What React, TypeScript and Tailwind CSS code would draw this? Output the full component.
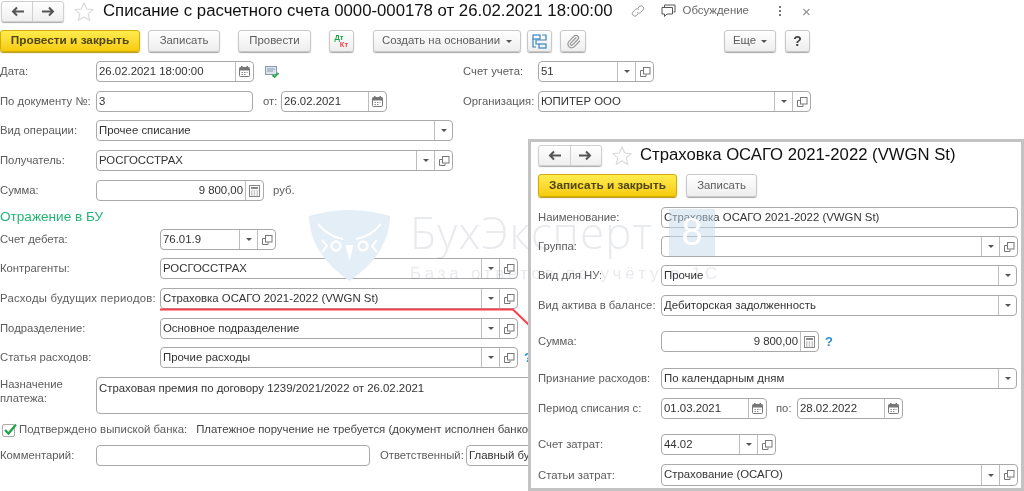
import type { ReactNode } from "react";
import { Paperclip } from "lucide-react";

type Slot = "drop" | "open" | "cal" | "calc";

const font = { fontFamily: '"Liberation Sans", Arial, sans-serif' };

function SlotIcon({ type }: { type: Slot }) {
  if (type === "drop") {
    return (
      <svg width="6" height="3" viewBox="0 0 6 3">
        <path d="M0 0h6L3 3z" fill="#555" />
      </svg>
    );
  }
  if (type === "open") {
    return (
      <svg width="12" height="12" viewBox="0 0 12 12" fill="none" stroke="#777" strokeWidth="1">
        <rect x="4.5" y="1.5" width="6.5" height="6.5" fill="#fff" />
        <path d="M4 4.5H1.5V10.5H7V8.5" />
      </svg>
    );
  }
  if (type === "cal") {
    return (
      <svg width="11" height="11" viewBox="0 0 11 11">
        <rect x="0.5" y="1.5" width="10" height="9" rx="1" fill="none" stroke="#777" />
        <rect x="0.5" y="1.5" width="10" height="3" fill="#777" />
        <rect x="2" y="0" width="1.5" height="2" fill="#777" />
        <rect x="7.5" y="0" width="1.5" height="2" fill="#777" />
        <path d="M2.5 6.5h1.5M5 6.5h1.5M7.5 6.5h1M2.5 8.5h1.5M5 8.5h1.5" stroke="#888" />
      </svg>
    );
  }
  return (
    <svg width="11" height="12" viewBox="0 0 11 12">
      <rect x="0.5" y="0.5" width="10" height="11" fill="none" stroke="#888" />
      <rect x="2" y="2" width="7" height="2" fill="#888" />
      <path d="M2 6h1.5M4.7 6h1.5M7.5 6H9M2 8h1.5M4.7 8h1.5M7.5 8H9M2 10h1.5M4.7 10h1.5M7.5 10H9" stroke="#999" />
    </svg>
  );
}

function Field({
  className,
  text,
  slots = [],
  right,
}: {
  className: string;
  text?: string;
  slots?: Slot[];
  right?: boolean;
}) {
  return (
    <div className={`flex h-full shrink-0 items-stretch rounded-[4px] border border-[#a9a9a9] ${className}`}>
      <div className={`min-w-0 flex-1 self-center truncate px-[2px] text-[11.4px] text-[#333] ${right ? "text-right" : ""}`}>
        {text}
      </div>
      {slots.map((s, i) => (
        <div key={i} className="flex w-[18px] shrink-0 items-center justify-center border-l border-[#bdbdbd]">
          <SlotIcon type={s} />
        </div>
      ))}
    </div>
  );
}

function Row({ label, labelW, className, children }: { label: string; labelW: string; className: string; children: ReactNode }) {
  return (
    <div className={`flex items-center ${className}`}>
      <div className={`shrink-0 text-[11.3px] whitespace-nowrap text-[#5c5c5c] ${labelW}`}>{label}</div>
      {children}
    </div>
  );
}

function Btn({ className, children, yellow }: { className: string; children: ReactNode; yellow?: boolean }) {
  return (
    <div
      className={`flex h-full shrink-0 items-center justify-center rounded-[3px] border ${
        yellow
          ? "border-[#cfae0a] bg-gradient-to-b from-[#ffec4d] to-[#f6cb00] text-[11.8px] font-bold text-[#4f4610] shadow-[0_1px_1px_#b59a10]"
          : "border-[#c8c8c8] bg-gradient-to-b from-white to-[#eeeeee] text-[11.4px] text-[#5c5c5c] shadow-[0_1px_1px_#a8a8a8]"
      } ${className}`}
    >
      {children}
    </div>
  );
}

function Nav({ className }: { className: string }) {
  const arrow = (d: string) => (
    <svg width="13" height="11" viewBox="0 0 13 11" fill="none" stroke="#555" strokeWidth="2">
      <path d={d} />
    </svg>
  );
  return (
    <div className={`flex h-[21px] shrink-0 rounded-[3px] border border-[#d0d0d0] bg-gradient-to-b from-white to-[#efefef] shadow-[0_1px_1px_#aaa] ${className}`}>
      <div className="flex flex-1 items-center justify-center border-r border-[#d0d0d0]">{arrow("M13 5.5H2M6 1.5l-4 4 4 4")}</div>
      <div className="flex flex-1 items-center justify-center">{arrow("M0 5.5h11M7 1.5l4 4-4 4")}</div>
    </div>
  );
}

function Star({ className }: { className: string }) {
  return (
    <svg className={`shrink-0 ${className}`} width="20" height="19" viewBox="0 0 20 19" fill="#fff" stroke="#d8dadc" strokeWidth="1.2">
      <path d="M10 1l2.7 6 6.3.7-4.7 4.2 1.3 6.3L10 15l-5.6 3.2 1.3-6.3L1 7.7 7.3 7z" />
    </svg>
  );
}

function DocWindow() {
  return (
    <div className="absolute top-[139px] left-[528px] h-[352px] w-[496px] border-[3px] border-[#c3c3c3] bg-white pl-[7px]">
      <div className="mt-[3px] flex h-[21px] items-center">
        <Nav className="w-[64px]" />
        <Star className="ml-[10px]" />
        <div className="ml-[8px] text-[16.7px] leading-none whitespace-nowrap text-[#111]">Страховка ОСАГО 2021-2022 (VWGN St)</div>
      </div>
      <div className="mt-[8px] flex h-[23px] gap-[9px]">
        <Btn yellow className="w-[139px]">Записать и закрыть</Btn>
        <Btn className="w-[71px]">Записать</Btn>
      </div>
      <Row label="Наименование:" labelW="w-[123px]" className="mt-[10px] h-[21px]">
        <Field className="w-[357px]" text="Страховка ОСАГО 2021-2022 (VWGN St)" />
      </Row>
      <Row label="Группа:" labelW="w-[123px]" className="mt-[8px] h-[21px]">
        <Field className="w-[357px]" slots={["drop", "open"]} />
      </Row>
      <Row label="Вид для НУ:" labelW="w-[123px]" className="mt-[8px] h-[21px]">
        <Field className="w-[356px]" text="Прочие" slots={["drop"]} />
      </Row>
      <Row label="Вид актива в балансе:" labelW="w-[123px]" className="mt-[9px] h-[21px]">
        <Field className="w-[356px]" text="Дебиторская задолженность" slots={["drop"]} />
      </Row>
      <Row label="Сумма:" labelW="w-[123px]" className="mt-[15px] h-[21px]">
        <Field className="w-[158px]" text="9 800,00" right slots={["calc"]} />
        <div className="ml-[6px] text-[13px] font-bold text-[#2f8fce]">?</div>
      </Row>
      <Row label="Признание расходов:" labelW="w-[123px]" className="mt-[16px] h-[21px]">
        <Field className="w-[356px]" text="По календарным дням" slots={["drop"]} />
      </Row>
      <Row label="Период списания с:" labelW="w-[123px]" className="mt-[9px] h-[21px]">
        <Field className="w-[106px]" text="01.03.2021" slots={["cal"]} />
        <div className="w-[30px] pl-[9px] text-[11.3px] text-[#5c5c5c]">по:</div>
        <Field className="w-[106px]" text="28.02.2022" slots={["cal"]} />
      </Row>
      <Row label="Счет затрат:" labelW="w-[123px]" className="mt-[15px] h-[21px]">
        <Field className="w-[115px]" text="44.02" slots={["drop", "open"]} />
      </Row>
      <Row label="Статьи затрат:" labelW="w-[123px]" className="mt-[9px] h-[22px]">
        <Field className="w-[357px]" text="Страхование (ОСАГО)" slots={["drop", "open"]} />
      </Row>
    </div>
  );
}

function Watermark() {
  return (
    <div className="pointer-events-none absolute top-[209px] left-[309px] flex">
      <svg width="81" height="72" viewBox="0 0 81 72">
        <path d="M0 7Q40 -5 81 7Q80 45 40.500 72Q1 45 0 7Z" fill="#e3eef7" />
        <g fill="none" stroke="#fff" strokeWidth="2.500">
          <path d="M9 15Q20 28 34 30M72 15Q61 28 47 30" strokeWidth="2" />
          <circle cx="27" cy="37" r="4.500" />
          <circle cx="54" cy="37" r="4.500" />
          <path d="M13 31l5 6-5 6M68 31l-5 6 5 6" strokeWidth="2" />
        </g>
        <path d="M36.500 36h8l-4 16z" fill="#fff" />
      </svg>
      <div className="ml-[20px] w-[305px]">
        <div className="flex items-center justify-between">
          <div
            className="text-[44px] leading-[47px] font-light tracking-[1px] whitespace-nowrap text-[#6b7488]/15"
            style={{ fontFamily: '"Open Sans", sans-serif' }}
          >
            БухЭксперт
          </div>
          <div className="flex h-[47px] w-[46px] items-center justify-center bg-[#c4daec]/50 text-[38px] text-white">8</div>
        </div>
        <div className="mt-[5px] text-[17px] tracking-[3.7px] whitespace-nowrap text-[#6b7488]/15">База ответов по учёту в 1С</div>
      </div>
    </div>
  );
}

export default function App() {
  return (
    <div className="relative h-[491px] w-[1024px] overflow-hidden bg-white blur-[0.35px]" style={font}>
      {/* основной документ */}
      <div className="flex h-[21px] items-center pt-[1px] pl-[1px]">
        <Nav className="w-[63px]" />
        <Star className="ml-[10px]" />
        <div className="ml-[9px] text-[16.75px] leading-none whitespace-nowrap text-[#111]">
          Списание с расчетного счета 0000-000178 от 26.02.2021 18:00:00
        </div>
        <svg className="ml-[18px] shrink-0" width="14" height="14" viewBox="0 0 14 14" fill="none" stroke="#999" strokeWidth="1">
          <path d="M6 8.500a2.500 2.500 0 0 0 3.600 0l2.300-2.300a2.500 2.500 0 0 0-3.600-3.600L7 3.800M8 5.500a2.500 2.500 0 0 0-3.600 0L2.100 7.800a2.500 2.500 0 0 0 3.600 3.600L7 10.200" />
        </svg>
        <svg className="ml-[16px] shrink-0" width="15" height="14" viewBox="0 0 15 14" fill="none" stroke="#555" strokeWidth="1">
          <path d="M3.500 3V1H14V8H12.500M1 3.500H11.500V10H6L3.500 12.500V10H1Z" />
        </svg>
        <div className="ml-[7px] text-[11.4px] whitespace-nowrap text-[#666]">Обсуждение</div>
        <div className="ml-[30px] flex flex-col gap-[2px]">
          <div className="h-[2px] w-[2px] bg-[#777]" />
          <div className="h-[2px] w-[2px] bg-[#777]" />
          <div className="h-[2px] w-[2px] bg-[#777]" />
        </div>
        <div className="ml-[21px] text-[15px] leading-none text-[#888]">×</div>
      </div>

      <div className="mt-[9px] flex h-[22px]">
        <Btn yellow className="w-[140px]">Провести и закрыть</Btn>
        <Btn className="ml-[8px] w-[72px]">Записать</Btn>
        <Btn className="ml-[18px] w-[73px]">Провести</Btn>
        <Btn className="ml-[18px] w-[25px] flex-col">
          <span className="-ml-[5px] text-[7.5px] leading-[7px] font-bold text-[#1aa34a]">Дт</span>
          <span className="ml-[5px] text-[7.5px] leading-[7px] font-bold text-[#ee4444]">Кт</span>
        </Btn>
        <Btn className="ml-[19px] w-[148px] gap-[6px]">
          Создать на основании
          <SlotIcon type="drop" />
        </Btn>
        <Btn className="ml-[6px] w-[25px]">
          <svg width="15" height="15" viewBox="0 0 15 15" fill="none" stroke="#3a86bd" strokeWidth="1.200">
            <rect x="1" y="1" width="7" height="4" />
            <rect x="7" y="10" width="7" height="4" />
            <path d="M10 1h4v5H4v4h3M1 5v8h3" />
          </svg>
        </Btn>
        <Btn className="ml-[8px] w-[26px]">
          <Paperclip size={15} color="#999" strokeWidth={2} />
        </Btn>
        <Btn className="ml-[138px] w-[52px] gap-[5px]">
          Еще
          <SlotIcon type="drop" />
        </Btn>
        <Btn className="ml-[9px] w-[25px]">
          <span className="text-[14px] font-bold text-[#444]">?</span>
        </Btn>
      </div>

      <div className="mt-[9px] flex h-[21px]">
        <Row label="Дата:" labelW="w-[96px]" className="w-[463px]">
          <Field className="w-[158px]" text="26.02.2021 18:00:00" slots={["cal"]} />
          <svg className="ml-[11px]" width="15" height="12" viewBox="0 0 15 12">
            <rect x="0.500" y="0.500" width="11" height="8" fill="#dbe4ee" stroke="#8a9bb0" />
            <path d="M2 3h8M2 5h6" stroke="#8a9bb0" />
            <path d="M7.500 9l2 2 4-4" fill="none" stroke="#2fa84f" strokeWidth="1.800" />
          </svg>
        </Row>
        <Row label="Счет учета:" labelW="w-[75px]" className="">
          <Field className="w-[116px]" text="51" slots={["drop", "open"]} />
        </Row>
      </div>

      <div className="mt-[9px] flex h-[21px]">
        <Row label="По документу №:" labelW="w-[96px]" className="w-[463px]">
          <Field className="w-[157px]" text="3" />
          <div className="w-[28px] pl-[10px] text-[11.3px] text-[#5c5c5c]">от:</div>
          <Field className="w-[106px]" text="26.02.2021" slots={["cal"]} />
        </Row>
        <Row label="Организация:" labelW="w-[75px]" className="">
          <Field className="w-[273px]" text="ЮПИТЕР ООО" slots={["drop", "open"]} />
        </Row>
      </div>

      <Row label="Вид операции:" labelW="w-[96px]" className="mt-[8px] h-[21px]">
        <Field className="w-[357px]" text="Прочее списание" slots={["drop"]} />
      </Row>
      <Row label="Получатель:" labelW="w-[96px]" className="mt-[9px] h-[21px]">
        <Field className="w-[357px]" text="РОСГОССТРАХ" slots={["drop", "open"]} />
      </Row>
      <Row label="Сумма:" labelW="w-[96px]" className="mt-[9px] h-[21px]">
        <Field className="w-[168px]" text="9 800,00" right slots={["calc"]} />
        <div className="ml-[9px] text-[11.3px] text-[#5c5c5c]">руб.</div>
      </Row>

      <div className="mt-[6px] h-[20px] text-[13.6px] leading-[20px] text-[#22b573]">Отражение в БУ</div>

      <Row label="Счет дебета:" labelW="w-[160px]" className="mt-[2px] h-[21px]">
        <Field className="w-[116px]" text="76.01.9" slots={["drop", "open"]} />
      </Row>
      <Row label="Контрагенты:" labelW="w-[160px]" className="mt-[8px] h-[21px]">
        <Field className="w-[358px]" text="РОСГОССТРАХ" slots={["drop", "open"]} />
      </Row>
      <Row label="Расходы будущих периодов:" labelW="w-[160px] tracking-[0.25px]" className="mt-[9px] h-[21px]">
        <Field className="w-[358px] tracking-normal" text="Страховка ОСАГО 2021-2022 (VWGN St)" slots={["drop", "open"]} />
      </Row>
      <Row label="Подразделение:" labelW="w-[160px]" className="mt-[9px] h-[21px]">
        <Field className="w-[358px]" text="Основное подразделение" slots={["drop", "open"]} />
      </Row>
      <Row label="Статья расходов:" labelW="w-[160px]" className="mt-[8px] h-[21px]">
        <Field className="w-[358px]" text="Прочие расходы" slots={["drop", "open"]} />
        <div className="ml-[6px] text-[13px] font-bold text-[#2f8fce]">?</div>
      </Row>

      <div className="mt-[9px] flex h-[37px]">
        <div className="w-[96px] text-[11.3px] leading-[14px] text-[#5c5c5c]">
          Назначение
          <br />
          платежа:
        </div>
        <div className="w-[440px] rounded-[4px] border border-[#a9a9a9] px-[2px] py-[3px] text-[11.4px] leading-[14px] text-[#333]">
          Страховая премия по договору 1239/2021/2022 от 26.02.2021
        </div>
      </div>

      <div className="mt-[6px] flex h-[20px] items-center text-[11.4px] whitespace-nowrap">
        <div className="relative ml-[2px] h-[13px] w-[13px] rounded-[2px] border border-[#aaa]">
          <svg className="absolute -top-[3px] left-0" width="15" height="15" viewBox="0 0 15 15" fill="none" stroke="#1fa14a" strokeWidth="2.200">
            <path d="M2 8l3.500 3.500L13 2.500" />
          </svg>
        </div>
        <div className="ml-[4px] text-[#5c5c5c]">Подтверждено выпиской банка:</div>
        <div className="ml-[9px] text-[#444]">Платежное поручение не требуется (документ исполнен банком)</div>
      </div>

      <Row label="Комментарий:" labelW="w-[96px]" className="mt-[5px] h-[21px]">
        <Field className="w-[274px]" />
        <div className="w-[96px] pl-[10px] text-[11.3px] whitespace-nowrap text-[#5c5c5c]">Ответственный:</div>
        <Field className="w-[200px]" text="Главный бухгалтер" />
      </Row>

      {/* красная линия к окну */}
      <svg className="absolute top-[306px] left-[160px]" width="372" height="22" viewBox="0 0 372 22" fill="none" stroke="#f8414f" strokeWidth="2">
        <path d="M0 3.500H353L369 19" />
      </svg>

      <DocWindow />
      <Watermark />
    </div>
  );
}
